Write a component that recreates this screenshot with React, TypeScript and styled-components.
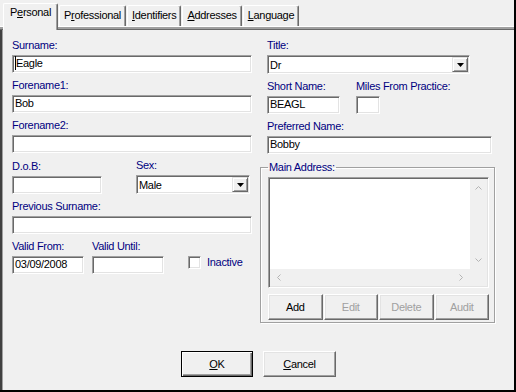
import styled, { createGlobalStyle } from "styled-components";

const GlobalStyle = createGlobalStyle`
  html, body {
    margin: 0;
    padding: 0;
    background: #f0f0f0;
  }
  body {
    font-family: "Liberation Sans", Arial, sans-serif;
    font-size: 11px;
    letter-spacing: -0.3px;
    color: #000;
  }
`;

const tabs = ["Personal", "Professional", "Identifiers", "Addresses", "Language"];
const accessKeys = [1, 1, 0, 0, 0];

function TabTitle({ text, index }: { text: string; index: number }) {
  const i = accessKeys[index];
  return (
    <>
      {text.slice(0, i)}
      <u>{text[i]}</u>
      {text.slice(i + 1)}
    </>
  );
}

function Arrow() {
  return (
    <svg width="7" height="4" viewBox="0 0 7 4">
      <polygon points="0,0 7,0 3.5,4" fill="#000" />
    </svg>
  );
}

export default function App() {
  return (
    <>
      <GlobalStyle />
      <St.Window>
        <St.TabBar>
          {tabs.map((t, i) => (
            <St.Tab key={t} $active={i === 0}>
              <TabTitle text={t} index={i} />
            </St.Tab>
          ))}
        </St.TabBar>

        <St.Panel>
          <St.Content>
            <St.Column>
              <St.Field $w={240}>
                <St.Label>Surname:</St.Label>
                <St.TextBox>
                  <St.Caret />
                  Eagle
                </St.TextBox>
              </St.Field>
              <St.Field $w={240}>
                <St.Label>Forename1:</St.Label>
                <St.TextBox>Bob</St.TextBox>
              </St.Field>
              <St.Field $w={240}>
                <St.Label>Forename2:</St.Label>
                <St.TextBox />
              </St.Field>
              <St.Row>
                <St.Field $w={90}>
                  <St.Label>D.o.B:</St.Label>
                  <St.TextBox />
                </St.Field>
                <St.Field $w={114} $ml={34}>
                  <St.Label>Sex:</St.Label>
                  <St.Select>
                    <St.SelectText>Male</St.SelectText>
                    <St.DropButton>
                      <Arrow />
                    </St.DropButton>
                  </St.Select>
                </St.Field>
              </St.Row>
              <St.Field $w={240}>
                <St.Label>Previous Surname:</St.Label>
                <St.TextBox />
              </St.Field>
              <St.Row>
                <St.Field $w={72}>
                  <St.Label>Valid From:</St.Label>
                  <St.TextBox>03/09/2008</St.TextBox>
                </St.Field>
                <St.Field $w={72} $ml={8}>
                  <St.Label>Valid Until:</St.Label>
                  <St.TextBox />
                </St.Field>
                <St.Check>
                  <St.CheckBox />
                  <St.Label>Inactive</St.Label>
                </St.Check>
              </St.Row>
            </St.Column>

            <St.Column>
              <St.RightFields>
                <St.Field $w={203}>
                  <St.Label>Title:</St.Label>
                  <St.Select>
                    <St.SelectText>Dr</St.SelectText>
                    <St.DropButton>
                      <Arrow />
                    </St.DropButton>
                  </St.Select>
                </St.Field>
                <St.Row>
                  <St.Field $w={73}>
                    <St.Label>Short Name:</St.Label>
                    <St.TextBox>BEAGL</St.TextBox>
                  </St.Field>
                  <St.Field $w={24} $ml={16}>
                    <St.Label>Miles From Practice:</St.Label>
                    <St.TextBox />
                  </St.Field>
                </St.Row>
                <St.Field $w={225}>
                  <St.Label>Preferred Name:</St.Label>
                  <St.TextBox>Bobby</St.TextBox>
                </St.Field>
              </St.RightFields>

              <St.GroupBox>
                <St.Legend>Main Address:</St.Legend>
                <St.ListBox>
                  <St.ListArea />
                  <St.VScroll>
                    <svg width="7" height="4" viewBox="0 0 7 4">
                      <polyline points="0.5,3.5 3.5,0.5 6.5,3.5" fill="none" stroke="#b4b4b4" />
                    </svg>
                    <svg width="7" height="4" viewBox="0 0 7 4">
                      <polyline points="0.5,0.5 3.5,3.5 6.5,0.5" fill="none" stroke="#b4b4b4" />
                    </svg>
                  </St.VScroll>
                  <St.HScroll>
                    <svg width="4" height="7" viewBox="0 0 4 7">
                      <polyline points="3.5,0.5 0.5,3.5 3.5,6.5" fill="none" stroke="#b4b4b4" />
                    </svg>
                    <svg width="4" height="7" viewBox="0 0 4 7">
                      <polyline points="0.5,0.5 3.5,3.5 0.5,6.5" fill="none" stroke="#b4b4b4" />
                    </svg>
                  </St.HScroll>
                  <St.Corner />
                </St.ListBox>
                <St.ButtonRow>
                  <St.Button>Add</St.Button>
                  <St.Button disabled>Edit</St.Button>
                  <St.Button disabled>Delete</St.Button>
                  <St.Button disabled>Audit</St.Button>
                </St.ButtonRow>
              </St.GroupBox>
            </St.Column>
          </St.Content>

          <St.Footer>
            <St.Button $default $w={72}>
              <u>O</u>K
            </St.Button>
            <St.Button $w={73}>
              <u>C</u>ancel
            </St.Button>
          </St.Footer>
        </St.Panel>
      </St.Window>
    </>
  );
}

const sunken = `
  border: 1px solid;
  border-color: #a0a0a0 #fff #fff #a0a0a0;
  box-shadow: inset 1px 1px 0 #696969, inset -1px -1px 0 #e3e3e3;
`;

const St = {
  Window: styled.div`
    width: 516px;
    height: 392px;
    box-sizing: border-box;
    border-right: 2px solid #000;
    border-bottom: 2px solid #000;
    background: #f0f0f0;
    display: flex;
    flex-direction: column;
  `,
  TabBar: styled.div`
    height: 26px;
    box-sizing: border-box;
    display: flex;
    align-items: flex-end;
    gap: 1px;
    padding-left: 3px;
  `,
  Tab: styled.div<{ $active?: boolean }>`
    box-sizing: border-box;
    height: ${({ $active }) => ($active ? 27 : 21)}px;
    margin-bottom: ${({ $active }) => ($active ? -4 : 0)}px;
    padding: ${({ $active }) => ($active ? "2px 6px 0" : "3px 4px 0")};
    border-top: 1px solid #fff;
    border-left: 1px solid #fff;
    border-right: 1px solid #696969;
    border-radius: 2px 2px 0 0;
    box-shadow: inset -1px 0 0 #a0a0a0;
    background: #f0f0f0;
    position: relative;
    z-index: ${({ $active }) => ($active ? 1 : 0)};
    line-height: 13px;
    white-space: nowrap;
  `,
  Panel: styled.div`
    flex: 1;
    display: flex;
    flex-direction: column;
    padding: 13px 0 13px 0;
    box-shadow: inset 0 1px 0 #fff, inset 0 3px 0 #a0a0a0, inset 0 4px 0 #696969, inset 2px 0 0 #404040,
      inset 3px 0 0 #a0a0a0;
  `,
  Content: styled.div`
    display: grid;
    grid-template-columns: 240px 235px;
    column-gap: 8px;
    align-items: start;
    padding-left: 12px;
  `,
  Column: styled.div`
    display: flex;
    flex-direction: column;
    gap: 6px;
  `,
  RightFields: styled.div`
    display: flex;
    flex-direction: column;
    gap: 6px;
    padding-left: 7px;
  `,
  Row: styled.div`
    display: flex;
    align-items: flex-end;
  `,
  Field: styled.div<{ $w: number; $ml?: number }>`
    display: flex;
    flex-direction: column;
    gap: 3px;
    width: ${({ $w }) => $w}px;
    margin-left: ${({ $ml }) => $ml ?? 0}px;
  `,
  Label: styled.div`
    color: #000080;
    line-height: 13px;
    height: 13px;
    white-space: nowrap;
  `,
  TextBox: styled.div`
    ${sunken}
    box-sizing: border-box;
    height: 18px;
    background: #fff;
    display: flex;
    align-items: flex-start;
    padding: 2px 2px 0;
    line-height: 10px;
    white-space: nowrap;
    overflow: hidden;
  `,
  Caret: styled.span`
    display: inline-block;
    width: 1px;
    height: 14px;
    margin-top: -2px;
    background: #000;
  `,
  Select: styled.div`
    ${sunken}
    box-sizing: border-box;
    height: 19px;
    background: #fff;
    display: flex;
  `,
  SelectText: styled.div`
    flex: 1;
    padding: 4px 0 0 2px;
    line-height: 10px;
  `,
  DropButton: styled.div`
    width: 16px;
    box-sizing: border-box;
    margin: 1px;
    background: #f0f0f0;
    border: 1px solid;
    border-color: #e3e3e3 #696969 #696969 #e3e3e3;
    box-shadow: inset 1px 1px 0 #fff, inset -1px -1px 0 #a0a0a0;
    display: flex;
    align-items: center;
    justify-content: center;
  `,
  Check: styled.div`
    display: flex;
    align-items: flex-start;
    gap: 6px;
    height: 18px;
    margin-left: 24px;
  `,
  CheckBox: styled.div`
    ${sunken}
    box-sizing: border-box;
    width: 13px;
    height: 13px;
    background: #fff;
  `,
  GroupBox: styled.fieldset`
    margin: 1px 0 0;
    padding: 3px 5px 2px 7px;
    min-width: 0;
    border: 1px solid #a0a0a0;
    box-shadow: inset 1px 1px 0 #fff, 1px 1px 0 #fff;
    display: flex;
    flex-direction: column;
    gap: 6px;
  `,
  Legend: styled.legend`
    padding: 0 1px;
    color: #000080;
    line-height: 13px;
  `,
  ListBox: styled.div`
    ${sunken}
    box-sizing: border-box;
    width: 221px;
    height: 111px;
    padding: 1px;
    display: grid;
    grid-template-columns: 1fr 17px;
    grid-template-rows: 1fr 17px;
  `,
  ListArea: styled.div`
    background: #fff;
  `,
  VScroll: styled.div`
    background: #f0f0f0;
    display: flex;
    flex-direction: column;
    align-items: center;
    justify-content: space-between;
    padding: 7px 0;
  `,
  HScroll: styled.div`
    background: #f0f0f0;
    display: flex;
    align-items: center;
    justify-content: space-between;
    padding: 0 7px;
  `,
  Corner: styled.div`
    background: #f0f0f0;
  `,
  ButtonRow: styled.div`
    display: grid;
    grid-template-columns: repeat(4, 1fr);
    gap: 1px;
    width: 221px;
  `,
  Button: styled.button<{ $default?: boolean; $w?: number }>`
    box-sizing: border-box;
    height: 26px;
    width: ${({ $w }) => ($w ? `${$w}px` : "auto")};
    padding: 0;
    font: inherit;
    letter-spacing: inherit;
    color: #000;
    background: #f0f0f0;
    border: 1px solid;
    border-color: ${({ $default }) => ($default ? "#000" : "#fff #696969 #696969 #fff")};
    box-shadow: ${({ $default }) =>
      $default
        ? "inset 1px 1px 0 #fff, inset -1px -1px 0 #696969, inset -2px -2px 0 #a0a0a0"
        : "inset -1px -1px 0 #a0a0a0, inset 1px 1px 0 #e3e3e3"};

    &:disabled {
      color: #a0a0a0;
    }
  `,
  Footer: styled.div`
    margin-top: auto;
    display: flex;
    justify-content: center;
    gap: 10px;
    padding-left: 3px;
  `,
};
